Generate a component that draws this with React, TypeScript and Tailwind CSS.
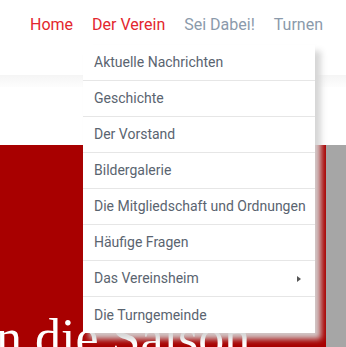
import React from "react";

const items = [
  "Aktuelle Nachrichten",
  "Geschichte",
  "Der Vorstand",
  "Bildergalerie",
  "Die Mitgliedschaft und Ordnungen",
  "Häufige Fragen",
  "Das Vereinsheim",
  "Die Turngemeinde",
];

export default function App() {
  return (
    <div className="relative w-[346px] h-[347px] overflow-hidden bg-white" style={{ fontFamily: "Roboto, 'Liberation Sans', sans-serif" }}>
      <header className="h-[75px] bg-white flex items-start pl-[30px] pt-[15px] gap-[19px] text-[16px] leading-[20px] whitespace-nowrap">
        <span className="text-[#e3262e]">Home</span>
        <span className="text-[#e3262e]">Der Verein</span>
        <span className="text-[#8b9aab]">Sei Dabei!</span>
        <span className="text-[#8b9aab]">Turnen</span>
      </header>
      <div className="h-[12px] bg-gradient-to-b from-[#f5f5f5] to-[#fdfdfd]" />
      <div className="h-[58px] bg-white" />
      <div className="flex h-[202px]">
        <div className="flex-1 bg-[#a80000] pt-[167px] overflow-hidden">
          <div
            className="text-white text-[52px] leading-[52px] whitespace-nowrap ml-[-4px]"
            style={{ fontFamily: "'Liberation Serif', serif" }}
          >
            n die Saison
          </div>
        </div>
        <div className="w-[20px] bg-[#a6a6a6]" />
      </div>

      <ul className="absolute left-[83px] top-[45px] w-[232px] bg-white shadow-[6px_6px_6px_rgba(212,212,212,0.95)] text-[14px] text-[#5a6470]">
        {items.map((t, i) => (
          <li
            key={t}
            className={`h-[36px] flex items-center justify-between pl-[11px] pr-[14px] whitespace-nowrap ${i < items.length - 1 ? "border-b border-[#e6e6e6]" : ""}`}
          >
            <span>{t}</span>
            {t === "Das Vereinsheim" && (
              <span className="w-0 h-0 border-y-[3px] border-y-transparent border-l-[4px] border-l-[#555]" />
            )}
          </li>
        ))}
      </ul>
    </div>
  );
}
